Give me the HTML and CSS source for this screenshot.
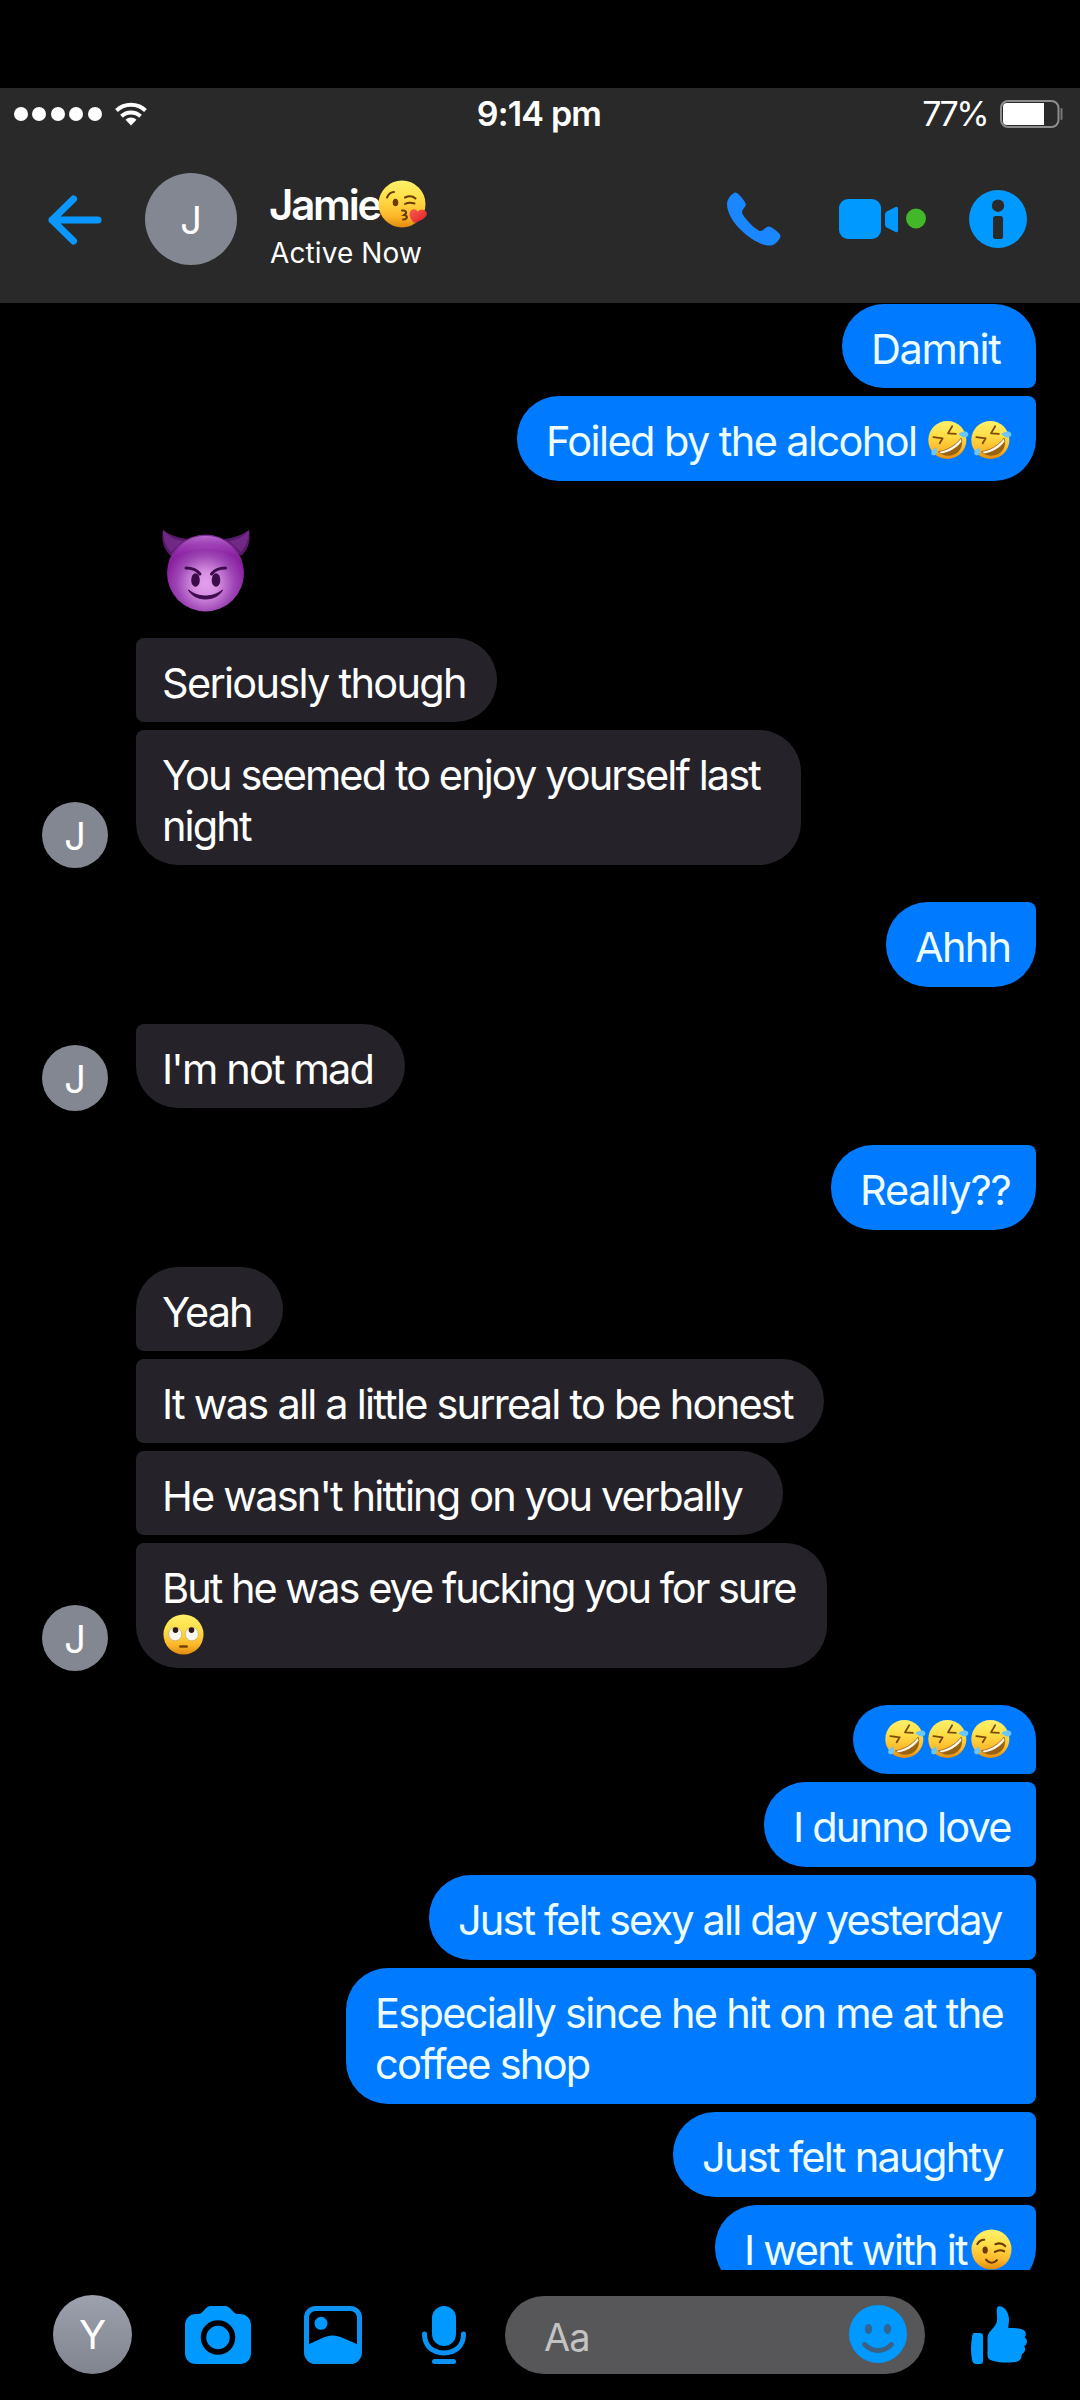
FILE: index.html
```html
<!DOCTYPE html>
<html lang="en">
<head>
<meta charset="utf-8">
<title>Jamie</title>
<link rel="stylesheet" href="styles.css">
</head>
<body>
<svg class="defs" width="0" height="0" aria-hidden="true">
  <defs>
    <linearGradient id="face" x1="0" y1="0" x2="0" y2="1">
      <stop offset="0" stop-color="#fff06a"/><stop offset=".35" stop-color="#ffe04a"/><stop offset=".75" stop-color="#fdb92a"/><stop offset="1" stop-color="#e08a10"/>
    </linearGradient>
    <linearGradient id="heart" x1="0" y1="0" x2="1" y2="1">
      <stop offset="0" stop-color="#ff5a4f"/><stop offset="1" stop-color="#d81f26"/>
    </linearGradient>
    <radialGradient id="devil" cx=".5" cy=".64" r=".62">
      <stop offset="0" stop-color="#e3a0ec"/><stop offset=".25" stop-color="#d78fe2"/><stop offset=".6" stop-color="#9d46b4"/><stop offset=".85" stop-color="#8a1fa0"/><stop offset="1" stop-color="#7d2a93"/>
    </radialGradient>
    <linearGradient id="shine" x1="0" y1="0" x2="0" y2="1">
      <stop offset="0" stop-color="#b668cc"/><stop offset="1" stop-color="#9a30b4" stop-opacity="0"/>
    </linearGradient>
    <symbol id="rofl" viewBox="0 0 42 42">
      <circle cx="19.800" cy="20.500" r="19.500" fill="url(#face)"/>
      <path d="M5.500 17.500l9.500 1.300-3 5" fill="none" stroke="#7b4a0a" stroke-width="1.900" stroke-linejoin="round" stroke-linecap="round"/>
      <path d="M24.700 6.500l-4.200 7.200 8 .5" fill="none" stroke="#7b4a0a" stroke-width="1.900" stroke-linejoin="round" stroke-linecap="round"/>
      <path d="M11 32.500C20 31 28.500 26 34 18.500c2.500 7-.5 14.500-7.500 17-6.500 2.300-12 .8-15.500-3z" fill="#9a640f"/>
      <path d="M10.500 32.500C20 31 28.500 26 33.800 18.500l.9 3.500C29.500 29 22 33.500 13.500 34.500z" fill="#fffaf0" stroke="#8a560c" stroke-width=".7"/>
      <path d="M31 14.500c3-3 8.500-3.500 10-1s-1.500 5-5.500 4.200z" fill="#6cc7f4"/>
      <path d="M8 28c2 4 1.500 7-1 8s-5-1.500-3-4.500z" fill="#6cc7f4"/>
    </symbol>
    <symbol id="roll" viewBox="0 0 42 42">
      <circle cx="21" cy="21" r="20.500" fill="url(#face)"/>
      <ellipse cx="12.500" cy="20.500" rx="6.700" ry="7" fill="#f7f7f0" stroke="#b9a36a" stroke-width=".6"/>
      <ellipse cx="29.500" cy="20.500" rx="6.700" ry="7" fill="#f7f7f0" stroke="#b9a36a" stroke-width=".6"/>
      <circle cx="12.800" cy="16.500" r="2.900" fill="#2a1a10"/><circle cx="29.200" cy="16.500" r="2.900" fill="#2a1a10"/>
      <rect x="16.500" y="32" width="9" height="2.600" rx="1.200" fill="#7a4306"/>
    </symbol>
    <symbol id="wink" viewBox="0 0 42 42">
      <circle cx="21" cy="21" r="20.500" fill="url(#face)"/>
      <ellipse cx="14.500" cy="21.500" rx="2.700" ry="3.700" fill="#6b3a05"/>
      <path d="M6.500 15.500c1.500-3 4-4.500 7-4.500M25 15.500c4-1.500 7.500-.8 10 2M24.500 23.500c3-2 6.500-2.200 9.500-.7M15.500 31.500c3.500 4 7.500 4 11 .5" fill="none" stroke="#6b3a05" stroke-width="2.200" stroke-linecap="round"/>
    </symbol>
    <symbol id="kiss" viewBox="0 0 49 48">
      <circle cx="24" cy="24" r="23.500" fill="url(#face)"/>
      <ellipse cx="17.500" cy="22.500" rx="2.800" ry="3.800" fill="#6b3a05"/>
      <path d="M9 17.500c1.500-3.500 4-5.500 7-5.500M27 17.500c4-1.800 8-1.200 10.500 1M27 24c3-1.800 6-1.700 9.500-.5M24 30.500c4-.5 6 2 2 4.500 4 .5 4 4.500-1 4.500" fill="none" stroke="#6b3a05" stroke-width="2" stroke-linecap="round"/>
      <path d="M36 43c-4-5-6-9-3-12.500 2-2 5.500-1.200 6.500 1.200 2.500-3 8-2.200 9.200 1 1.300 4.300-5.700 8.300-12.700 10.300z" fill="url(#heart)"/>
    </symbol>
    <symbol id="imp" viewBox="0 0 88 83">
      <path d="M1 0c-2 11 1 20 8 26l17-17C16 8 8 5 1 0zM87 0c2 11-1 20-8 26L62 9C72 8 80 5 87 0z" fill="#5a1a6b"/>
      <path d="M1 0c6 7 12 10 20 11L9 22C4 16 1 9 1 0zM87 0c-6 7-12 10-20 11l12 11c5-6 8-13 8-22z" fill="#702a85"/>
      <circle cx="43.500" cy="43" r="38.500" fill="url(#devil)"/>
      <path d="M10 29C16 13 29 6 43.500 6s28 7 34 23C68 21 56 19 44 19s-24 2-34 10z" fill="url(#shine)"/>
      <path d="M24 38c6.500 0 11 2 14 6M63.500 38c-6.500 0-11 2-14 6" fill="none" stroke="#3c0b4c" stroke-width="3" stroke-linecap="round"/>
      <ellipse cx="33.500" cy="50" rx="4.300" ry="6.800" fill="#3c0b4c"/><ellipse cx="54" cy="50" rx="4.300" ry="6.800" fill="#3c0b4c"/>
      <path d="M26.500 60c10 8 24 8 34 0-6 12-28 12-34 0z" fill="#3c0b4c" stroke="#3c0b4c" stroke-linejoin="round"/>
    </symbol>
  </defs>
</svg>

<div class="screen">
  <header class="top">
    <div class="status">
      <div class="signal">
        <i></i><i></i><i></i><i></i><i></i>
        <svg class="wifi" width="32" height="24" viewBox="0 0 32 24" fill="none" stroke="#fff" stroke-width="4">
          <path d="M1.500 8.500a21 21 0 0 1 29 0M6.500 14.200a13.800 13.800 0 0 1 19 0"/><path d="M16 23.500l-5.500-5.700a8 8 0 0 1 11 0z" fill="#fff" stroke="none"/>
        </svg>
      </div>
      <div class="time">9:14 pm</div>
      <div class="power"><span>77%</span>
        <svg width="64" height="28" viewBox="0 0 64 28"><rect x="1" y="1" width="57.500" height="26" rx="7" fill="none" stroke="#8d8d8d" stroke-width="2"/><path d="M7 3h37v22H7a4 4 0 0 1-4-4V7a4 4 0 0 1 4-4z" fill="#fff"/><rect x="60.500" y="8" width="2" height="12" rx="1" fill="#777"/></svg>
      </div>
    </div>
    <div class="bar">
      <svg class="back" width="54" height="50" viewBox="0 0 54 50" fill="none" stroke="#0a97ff" stroke-width="7" stroke-linecap="round" stroke-linejoin="round"><path d="M50 25H4M25.500 4L4 25l21.500 21"/></svg>
      <div class="avatar big">J</div>
      <div class="who">
        <div class="name"><span>Jamie</span><svg width="49" height="48"><use href="#kiss"/></svg></div>
        <div class="active">Active Now</div>
      </div>
      <svg class="phone" width="54" height="54" viewBox="0 0 54 54"><path d="M8.500.5C11 .2 19 10.500 19 12.500c0 1.800-4 5-4 8 1 4.500 13.500 17.500 18 18.500 3.300.2 6-4.500 8.500-4.500 3 0 12 6.500 12 9.500 0 3-5.500 9.500-10 9.500C29 54.500 0 31 0 12 0 6.500 5.500.8 8.500.5z" fill="#1a86ff"/></svg>
      <svg class="video" width="87" height="40" viewBox="0 0 87 40"><rect width="42" height="40" rx="9" fill="#0099ff"/><path d="M46 15.500q0-2 1.600-3l9-4.500Q59 7.200 59 9.600v21.800q0 2.400-2.400 1.600l-9-4.500Q46 27.500 46 25.500z" fill="#0099ff"/><circle cx="77" cy="19.500" r="10" fill="#42b72a"/></svg>
      <svg class="info" width="58" height="58" viewBox="0 0 58 58"><circle cx="29" cy="29" r="29" fill="#0099ff"/><circle cx="29" cy="15.700" r="6.200" fill="#292929"/><rect x="24" y="26" width="10" height="23" rx="2.500" fill="#292929"/></svg>
    </div>
  </header>

  <main class="thread">
    <div class="group out g1">
      <div class="bubble b1">Damnit&nbsp;</div>
      <div class="bubble b2"><span>Foiled by the alcohol</span><span class="emojis"><svg><use href="#rofl"/></svg><svg><use href="#rofl"/></svg></span></div>
    </div>
    <div class="group in g2">
      <div class="stack">
        <svg class="imp" width="88" height="83"><use href="#imp"/></svg>
        <div class="bubble b3">Seriously though</div>
        <div class="bubble b4">You seemed to enjoy yourself last<br>night</div>
      </div>
      <div class="avatar">J</div>
    </div>
    <div class="group out"><div class="bubble b5">Ahhh</div></div>
    <div class="group in"><div class="stack"><div class="bubble b6">I'm not mad</div></div><div class="avatar">J</div></div>
    <div class="group out"><div class="bubble b7">Really??</div></div>
    <div class="group in">
      <div class="stack">
        <div class="bubble b8">Yeah</div>
        <div class="bubble b9">It was all a little surreal to be honest</div>
        <div class="bubble b10">He wasn't hitting on you verbally&nbsp;</div>
        <div class="bubble b11">But he was eye fucking you for sure<span class="last"><svg><use href="#roll"/></svg></span></div>
      </div>
      <div class="avatar">J</div>
    </div>
    <div class="group out">
      <div class="bubble b12"><span class="emojis"><svg><use href="#rofl"/></svg><svg><use href="#rofl"/></svg><svg><use href="#rofl"/></svg></span></div>
      <div class="bubble b13">I dunno love</div>
      <div class="bubble b14">Just felt sexy all day yesterday&nbsp;</div>
      <div class="bubble b15">Especially since he hit on me at the<br>coffee shop</div>
      <div class="bubble b16">Just felt naughty&nbsp;</div>
      <div class="bubble b17"><span>I went with it</span><span class="emojis"><svg><use href="#wink"/></svg></span></div>
    </div>
  </main>

  <footer class="composer">
    <div class="avatar you">Y</div>
    <svg class="camera" width="66" height="58" viewBox="0 0 66 58"><path fill="#0099ff" d="M26 0h14c6 0 7.500 8 13 8h2c6 0 11 4.500 11 11v28c0 6.500-4.500 11-11 11H11C4.500 58 0 53.500 0 47V19C0 12.500 5 8 11 8h2c5.500 0 7-8 13-8z"/><circle cx="33" cy="31.500" r="14.500" fill="#0099ff" stroke="#000" stroke-width="5.500"/></svg>
    <svg class="photo" width="58" height="58" viewBox="0 0 58 58"><rect x="2.500" y="2.500" width="53" height="53" rx="9" fill="none" stroke="#0c92f2" stroke-width="5"/><path d="M3 39c9-3.500 18-9.500 25.500-9.500S46 35.500 55 39v8c0 5-3 8-8 8H11c-5 0-8-3-8-8z" fill="#0099ff"/><circle cx="17" cy="17.300" r="6.500" fill="#0099ff"/></svg>
    <svg class="mic" width="44" height="58" viewBox="0 0 44 58"><rect x="10" width="24" height="40" rx="12" fill="#0099ff"/><path d="M2.500 28c0 12.500 8.500 19 19.500 19s19.500-6.500 19.500-19" fill="none" stroke="#0c92f2" stroke-width="5" stroke-linecap="round"/><rect x="10" y="53" width="24" height="5" rx="2.500" fill="#0c92f2"/></svg>
    <div class="field"><span>Aa</span>
      <svg width="58" height="58" viewBox="0 0 58 58"><circle cx="29" cy="29" r="29" fill="#0099ff"/><ellipse cx="19.500" cy="24" rx="3.700" ry="5" fill="#33648f"/><ellipse cx="38.500" cy="24" rx="3.700" ry="5" fill="#33648f"/><path d="M15.500 39.500c8 8 19 8 27 0" fill="none" stroke="#3c5f82" stroke-width="4.800" stroke-linecap="round"/></svg>
    </div>
    <svg class="thumb" width="56" height="58" viewBox="0 0 56 58"><path fill="#0099ff" d="M3 27h6q3 0 3 3v25q0 3-3 3H5q-3 0-4-4-2-11 0-23 .5-4 2-4zM27 .5c6-1.500 11 6 11 13 0 4-.7 6-.7 8.500 3 0 9-.2 13.500 1.200 4.500 1.500 5 5.300 2.800 8 3.500 2.500 3 7-.4 9 2 3.200.5 6.600-2.400 8-.3 5.500-3 7.800-8.300 8-8 .8-16.500.4-22.500-2-2-.8-3.500-2.500-3.500-5V31.500C16.500 25 26 21 26 14 26.500 9 24.500 3 27 .5z"/></svg>
  </footer>
</div>
</body>
</html>
```
FILE: styles.css
```css
* { box-sizing: border-box; }
body { margin: 0; background: #000; }
svg { display: block; flex: none; }
.defs { position: absolute; }
.screen {
  width: 1080px; height: 2400px; padding-top: 88px;
  display: flex; flex-direction: column; overflow: hidden;
  background: #000; color: #fff;
  font-family: Inter, "Noto Sans", sans-serif;
}

/* header */
.top { height: 215px; background: #292929; flex: none; }
.status {
  height: 50px; padding: 0 16px 0 14px;
  display: grid; grid-template-columns: 1fr auto 1fr; align-items: center;
  font-size: 34px; line-height: 50px;
}
.signal { display: flex; align-items: center; gap: 4.400px; }
.signal i { width: 14px; height: 14px; border-radius: 50%; background: #fff; }
.wifi { margin-left: 9px; }
.time { font-weight: 600; letter-spacing: -.8px; padding-top: 1px; }
.power { display: flex; justify-content: flex-end; align-items: center; gap: 13px; letter-spacing: -2.600px; }
.power span { padding-top: 1px; }
.bar { height: 165px; padding: 0 53px 0 48px; display: flex; align-items: flex-start; }
.back { margin-top: 57px; margin-right: 43px; }
.avatar {
  width: 66px; height: 66px; border-radius: 50%; background: #838791;
  display: flex; align-items: center; justify-content: center;
  font-size: 38px; line-height: 1; padding-top: 2px; flex: none;
}
.avatar.big { width: 92px; height: 92px; margin-top: 35px; padding-top: 1px; }
.who { margin: 42px auto 0 32px; }
.name { display: flex; font-size: 42px; line-height: 48px; font-weight: 600; letter-spacing: -2.200px; }
.name span { padding-top: 1px; width: 109px; }
.active { font-size: 28px; line-height: 34px; margin-top: 7px; padding-left: 1px; letter-spacing: .1px; }
.phone { margin-top: 54px; margin-right: 58px; }
.video { margin-top: 61px; margin-right: 43px; }
.info { margin-top: 52px; }

/* messages */
.thread {
  height: 1967px; padding: 1px 44px 0 42px; flex: none; overflow: hidden;
  display: flex; flex-direction: column; gap: 37px;
  font-size: 41.500px; line-height: 51px; letter-spacing: -1.850px; white-space: nowrap;
}
.group { display: flex; flex: none; }
.out { flex-direction: column; align-items: flex-end; gap: 8px; color: #ecfcff; }
.in { flex-direction: row-reverse; justify-content: flex-end; align-items: flex-end; gap: 28px; }
.in .avatar { margin-bottom: -3px; letter-spacing: 0; }
.stack { display: flex; flex-direction: column; align-items: flex-start; gap: 8px; }
.bubble { flex: none; }
.out .bubble { background: #007bff; padding: 20px 25px 14px 29px; border-radius: 42px 8px 8px 42px; }
.in .bubble { background: #252329; padding: 20px 20px 13px 26px; border-radius: 8px 42px 42px 8px; }
.out .bubble:last-child { border-bottom-right-radius: 42px; }
.in .bubble:last-child { border-bottom-left-radius: 42px; }
.out .b1, .out .b12 { border-top-right-radius: 42px; }
.in .b8 { border-top-left-radius: 42px; }
.g2 { margin-top: 12px; }
.imp { margin: 0 0 17px 26px; }
.emojis { display: flex; gap: 2px; }
.emojis svg, .last svg { width: 41px; height: 41px; }
.last { display: block; height: 41px; padding-left: 1px; }
.out .b2, .out .b17 { display: flex; justify-content: space-between; padding-right: 24px; }
.b2 .emojis, .b17 .emojis { margin-top: 4px; }

/* bubble widths and tracking */
.b1 { width: 194px; height: 84px; letter-spacing: -1.400px; }
.b2 { width: 519px; letter-spacing: -1.600px; }
.b3 { width: 361px; letter-spacing: -1.710px; }
.b4 { width: 665px; letter-spacing: -1.920px; }
.b5 { width: 150px; letter-spacing: -1.700px; }
.b6 { width: 269px; }
.b7 { width: 205px; letter-spacing: -1.200px; }
.b8 { width: 147px; letter-spacing: -1.950px; }
.b9 { width: 688px; letter-spacing: -1.780px; }
.b10 { width: 647px; }
.b11 { width: 691px; letter-spacing: -2px; }
.out .b12 { width: 183px; height: 69px; padding: 14px 24px 0 0; display: flex; justify-content: flex-end; }
.b13 { width: 272px; letter-spacing: -1.800px; }
.b14 { width: 607px; letter-spacing: -1.860px; }
.b15 { width: 690px; letter-spacing: -1.700px; }
.b16 { width: 363px; letter-spacing: -1.700px; }
.b17 { width: 321px; letter-spacing: -1.750px; }

/* composer */
.composer { height: 130px; flex: none; padding: 25px 53px 0; display: flex; align-items: flex-start; }
.avatar.you { width: 79px; height: 79px; background: linear-gradient(#9ca1ad, #80848e); font-size: 40px; padding-top: 1px; }
.camera { margin: 11px 0 0 53px; }
.photo { margin: 11px 0 0 53px; }
.mic { margin: 11px 0 0 60px; }
.field {
  width: 420px; height: 78px; margin: 1px 0 0 39px; padding: 0 18px 0 39px;
  display: flex; justify-content: space-between; align-items: center;
  border-radius: 39px; background: #575759; color: #c3c3c4; font-size: 38px;
}
.field span { padding-top: 3px; letter-spacing: -1px; }
.field svg { margin-top: -2px; }
.thumb { margin: 11px 0 0 46px; }
```
